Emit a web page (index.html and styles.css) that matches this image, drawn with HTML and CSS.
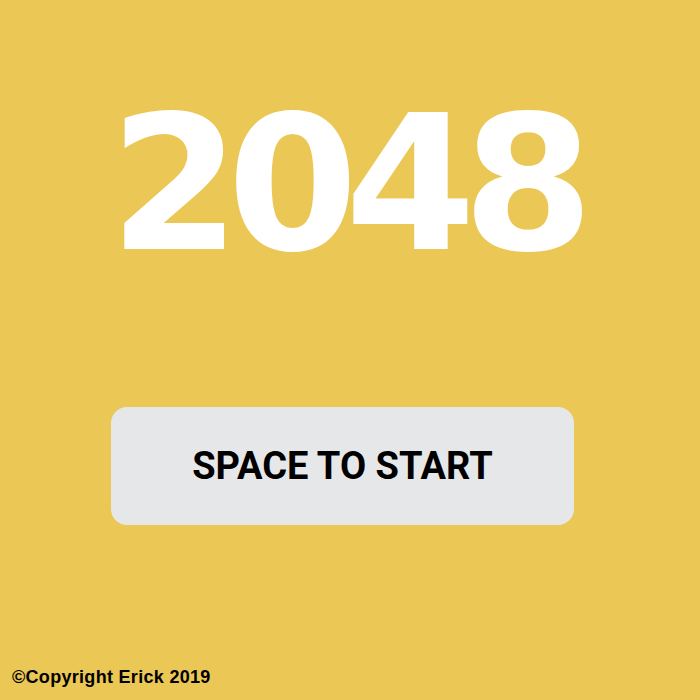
FILE: index.html
```html
<!DOCTYPE html>
<html>
<head>
<meta charset="utf-8">
<link rel="stylesheet" href="styles.css">
</head>
<body>
<main class="screen">
  <h1 class="title">2048</h1>
  <div class="start">SPACE TO START</div>
  <footer class="copy">©Copyright Erick 2019</footer>
</main>
</body>
</html>
```
FILE: styles.css
```css
html, body {
  margin: 0;
  padding: 0;
  background: #ebc756;
}
.screen {
  width: 700px;
  height: 700px;
  display: flex;
  flex-direction: column;
  align-items: center;
  box-sizing: border-box;
  padding-top: 90px;
}
.title {
  margin: 0 10px 0 0;
  font-family: "DejaVu Sans", sans-serif;
  font-weight: bold;
  font-size: 188px;
  line-height: 188px;
  letter-spacing: -13px;
  color: #ffffff;
}
.start {
  margin-top: 129px;
  margin-right: 15px;
  width: 463px;
  height: 118px;
  border-radius: 16px;
  background: #e6e7e9;
  display: flex;
  align-items: center;
  justify-content: center;
  font-family: "Roboto", sans-serif;
  font-weight: bold;
  font-size: 38px;
  color: #000000;
}
.copy {
  margin-top: auto;
  align-self: flex-start;
  padding: 0 0 12px 12px;
  font-family: "Liberation Sans", sans-serif;
  font-weight: bold;
  font-size: 18px;
  letter-spacing: 0.3px;
  color: #000000;
}
```
